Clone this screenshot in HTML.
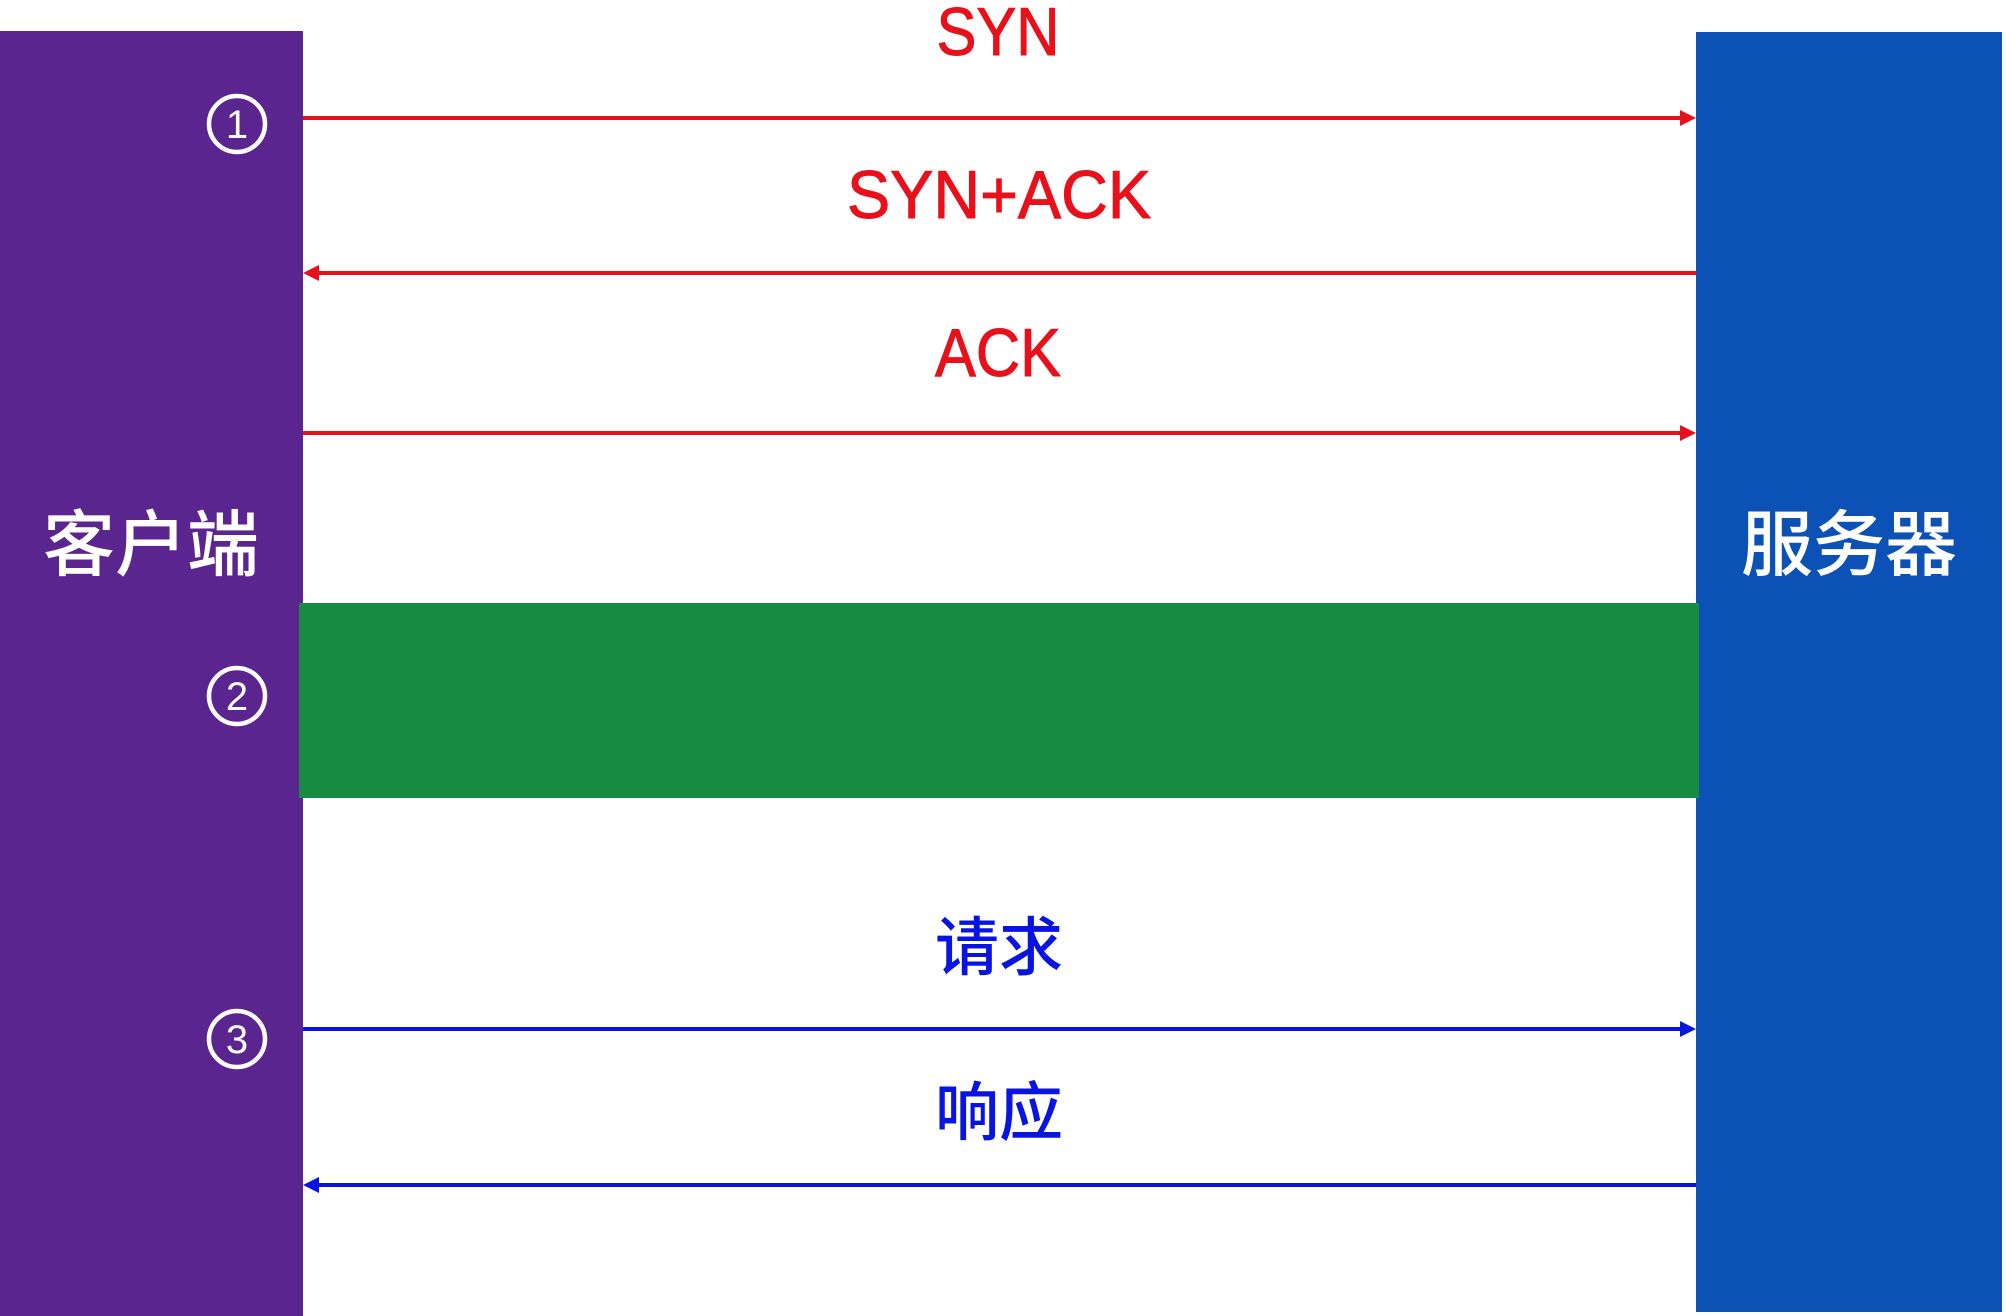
<!DOCTYPE html>
<html><head><meta charset="utf-8"><style>
html,body{margin:0;padding:0;background:#fff;width:2006px;height:1316px;overflow:hidden}
</style></head><body>
<svg width="2006" height="1316" viewBox="0 0 2006 1316" xmlns="http://www.w3.org/2000/svg" style="display:block">
<rect x="0" y="31" width="303" height="1285" fill="#5b2590"/>
<rect x="1696" y="32" width="306" height="1280" fill="#0b51b6"/>
<rect x="299" y="603" width="1400" height="195" fill="#178c40"/>
<g stroke="#e8101a" stroke-width="4" fill="#e8101a">
<line x1="303" y1="118" x2="1684" y2="118"/><polygon points="1696,118 1680,110 1680,126" stroke="none"/>
<line x1="316" y1="273" x2="1696" y2="273"/><polygon points="303,273 319,265 319,281" stroke="none"/>
<line x1="303" y1="433" x2="1684" y2="433"/><polygon points="1696,433 1680,425 1680,441" stroke="none"/>
</g>
<g stroke="#0a14e0" stroke-width="4" fill="#0a14e0">
<line x1="303" y1="1029" x2="1684" y2="1029"/><polygon points="1696,1029 1680,1021 1680,1037" stroke="none"/>
<line x1="316" y1="1185" x2="1696" y2="1185"/><polygon points="303,1185 319,1177 319,1193" stroke="none"/>
</g>
<g font-family="Liberation Sans, sans-serif" fill="#e8101a" stroke="#e8101a" stroke-width="1" font-size="68" text-anchor="middle">
<text x="998" y="55" textLength="123" lengthAdjust="spacingAndGlyphs">SYN</text>
<text x="999" y="218" textLength="304" lengthAdjust="spacingAndGlyphs">SYN+ACK</text>
<text x="998" y="376" textLength="126" lengthAdjust="spacingAndGlyphs">ACK</text>
</g>
<g font-family="Noto Sans CJK SC, sans-serif" fill="#0a14e0" font-size="64" font-weight="500" text-anchor="middle">
<text x="999" y="970">请求</text>
<text x="999" y="1135">响应</text>
</g>
<g font-family="Noto Sans CJK SC, sans-serif" fill="#fff" font-size="72" font-weight="500" text-anchor="middle">
<text x="151" y="570">客户端</text>
<text x="1849" y="570">服务器</text>
</g>
<g fill="none" stroke="#fff" stroke-width="4.5">
<circle cx="237" cy="124" r="28"/><circle cx="237" cy="696" r="28"/><circle cx="237" cy="1039" r="28"/>
</g>
<g font-family="Liberation Sans, sans-serif" fill="#fff" font-size="40" text-anchor="middle">
<text x="237" y="138">1</text><text x="237" y="710">2</text><text x="237" y="1053">3</text>
</g>
</svg>
</body></html>
